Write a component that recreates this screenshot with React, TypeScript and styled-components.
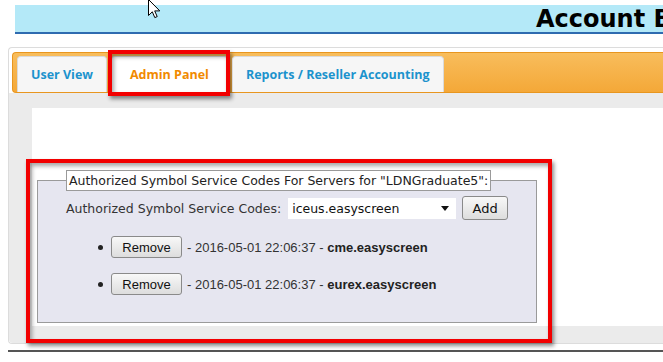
import styled, { createGlobalStyle } from "styled-components";

const GlobalStyle = createGlobalStyle`
  html, body {
    margin: 0;
    padding: 0;
    background: #fff;
    overflow: hidden;
  }
  body {
    font-family: "DejaVu Sans", Verdana, sans-serif;
    font-size: 12.5px;
    color: #222;
  }
`;

const codes = [
  { id: 1, date: "2016-05-01 22:06:37", code: "cme.easyscreen" },
  { id: 2, date: "2016-05-01 22:06:37", code: "eurex.easyscreen" },
];

const tabs = ["User View", "Admin Panel", "Reports / Reseller Accounting"];

const Cursor = () => (
  <S_Cursor width="13" height="20" viewBox="0 0 13 20">
    <path
      d="M0.5 0.5 L0.5 16.5 L4.3 12.8 L6.8 18.6 L9.2 17.6 L6.7 11.9 L11.8 11.9 Z"
      fill="#fff"
      stroke="#000"
      strokeWidth="1"
      strokeLinejoin="round"
    />
  </S_Cursor>
);

const App = () => {
  const activeTab = "Admin Panel";

  return (
    <S_Page>
      <GlobalStyle />
      <Cursor />
      <S_Header>Account Billing</S_Header>

      <S_Container>
        <S_TabBar>
          {tabs.map((tab) => (
            <S_Tab key={tab} $active={tab === activeTab}>
              {tab}
            </S_Tab>
          ))}
        </S_TabBar>

        <S_Content>
          <S_WhitePanel>
            <S_FieldsetWrap>
              <S_Fieldset>
                <S_Legend>
                  Authorized Symbol Service Codes For Servers for
                  "LDNGraduate5":
                </S_Legend>
                <S_Row>
                  <S_Label>Authorized Symbol Service Codes:</S_Label>
                  <S_Select>
                    <span>iceus.easyscreen</span>
                    <S_Arrow />
                  </S_Select>
                  <S_AddButton>Add</S_AddButton>
                </S_Row>
                <S_CodeList>
                  {codes.map((item) => (
                    <S_CodeItem key={item.id}>
                      <S_RemoveButton>Remove</S_RemoveButton>
                      <S_CodeText>
                        - {item.date} - <b>{item.code}</b>
                      </S_CodeText>
                    </S_CodeItem>
                  ))}
                </S_CodeList>
              </S_Fieldset>
            </S_FieldsetWrap>
          </S_WhitePanel>
        </S_Content>
      </S_Container>

      <S_BottomRule />
    </S_Page>
  );
};

export default App;

const S_Page = styled.div`
  position: relative;
  padding-top: 5px;
  width: 663px;
  height: 362px;
  overflow: hidden;
`;

const S_Cursor = styled.svg`
  position: absolute;
  left: 148px;
  top: -1px;
  z-index: 5;
`;

const S_Header = styled.div`
  margin-left: 15px;
  height: 27px;
  padding-left: 521px;
  background: #b4e9f8;
  border-bottom: 2px solid #2f6bb0;
  font-family: "DejaVu Sans", Verdana, sans-serif;
  font-size: 24px;
  font-weight: bold;
  line-height: 29px;
  color: #000;
  white-space: nowrap;
  overflow: hidden;
`;

const S_Container = styled.div`
  margin: 13px 0 0 8px;
  border: 1px solid #dcdcdc;
  border-right: none;
  border-radius: 4px 0 0 4px;
  background: #fff;
`;

const S_TabBar = styled.div`
  display: flex;
  align-items: flex-end;
  gap: 4px;
  height: 39px;
  margin: 4px 0 0 3px;
  padding-left: 4px;
  border: 1px solid #e8961f;
  border-right: none;
  border-radius: 4px 0 0 4px;
  background: linear-gradient(#f8bd5c, #f4a838);
`;

const S_Tab = styled.div<{ $active: boolean }>`
  position: relative;
  display: flex;
  align-items: center;
  height: 35px;
  padding: 0 ${(p) => (p.$active ? "18px" : "13px")};
  border: 1px solid #dadada;
  border-bottom: none;
  border-radius: 4px 4px 0 0;
  background: ${(p) => (p.$active ? "#fff" : "#f6f6f6")};
  color: ${(p) => (p.$active ? "#f18a00" : "#1c93cd")};
  font-family: "Open Sans", sans-serif;
  font-size: 12.5px;
  font-weight: bold;
  white-space: nowrap;

  &::after {
    content: "";
    display: ${(p) => (p.$active ? "block" : "none")};
    position: absolute;
    top: -7px;
    left: -4px;
    right: -3px;
    bottom: -4px;
    border: 4px solid #f20000;
    box-shadow: 2px 3px 4px rgba(0, 0, 0, 0.45),
      inset 2px 3px 4px rgba(0, 0, 0, 0.35);
  }
`;

const S_Content = styled.div`
  padding: 15px 0 17px 23px;
  background: #ebebeb;
  border-radius: 0 0 0 4px;
`;

const S_WhitePanel = styled.div`
  padding: 62px 0 3px 5px;
  background: #fff;
`;

const S_FieldsetWrap = styled.div`
  position: relative;
  width: 482px;

  &::after {
    content: "";
    position: absolute;
    top: -11px;
    left: -11px;
    right: -33px;
    bottom: -20px;
    border: 4px solid #f20000;
    box-shadow: 2px 3px 4px rgba(0, 0, 0, 0.45),
      inset 2px 3px 4px rgba(0, 0, 0, 0.35);
    pointer-events: none;
  }
`;

const S_Fieldset = styled.fieldset`
  box-sizing: border-box;
  width: 482px;
  margin: 0;
  padding: 5px 28px 27px 28px;
  border: 1px solid #9a9a9a;
  background: #e6e6f0;
`;

const S_Legend = styled.legend`
  padding: 1px 2px;
  border: 1px solid #9a9a9a;
  background: #fff;
  line-height: 17px;
  color: #222;
`;

const S_Row = styled.div`
  display: flex;
  align-items: center;
  height: 24px;
`;

const S_Label = styled.span`
  color: #333;
  white-space: nowrap;
`;

const S_Select = styled.div`
  display: flex;
  align-items: center;
  justify-content: space-between;
  box-sizing: border-box;
  width: 168px;
  height: 21px;
  margin-left: 7px;
  padding: 0 7px 0 4px;
  background: #fff;
  color: #111;
`;

const S_Arrow = styled.span`
  width: 0;
  height: 0;
  border-left: 4.5px solid transparent;
  border-right: 4.5px solid transparent;
  border-top: 5px solid #111;
`;

const S_Button = styled.button`
  box-sizing: border-box;
  padding: 0 9px;
  border: 1px solid #8a8a8a;
  border-radius: 3px;
  background: linear-gradient(#f8f8f8, #dddddd);
  color: #111;
  cursor: pointer;
`;

const S_AddButton = styled(S_Button)`
  height: 24px;
  width: 46px;
  margin-left: 6px;
  padding: 0;
  font-family: "DejaVu Sans", Verdana, sans-serif;
  font-size: 13px;
`;

const S_RemoveButton = styled(S_Button)`
  width: 71px;
  height: 22px;
  padding: 0;
  font-family: "Liberation Sans", Arial, sans-serif;
  font-size: 13px;
`;

const S_CodeList = styled.ul`
  list-style: none;
  margin: 16px 0 0 0;
  padding: 0 0 0 32px;
  display: flex;
  flex-direction: column;
  gap: 15px;
`;

const S_CodeItem = styled.li`
  display: flex;
  align-items: center;
  height: 22px;

  &::before {
    content: "";
    width: 5px;
    height: 5px;
    margin-right: 8px;
    border-radius: 50%;
    background: #222;
  }
`;

const S_CodeText = styled.span`
  margin-left: 5px;
  font-family: "Liberation Sans", Arial, sans-serif;
  font-size: 13px;
  color: #333;
  white-space: nowrap;

  b {
    font-weight: bold;
    color: #222;
  }
`;

const S_BottomRule = styled.div`
  margin: 6px 0 0 8px;
  border-top: 2px solid #555;
`;
